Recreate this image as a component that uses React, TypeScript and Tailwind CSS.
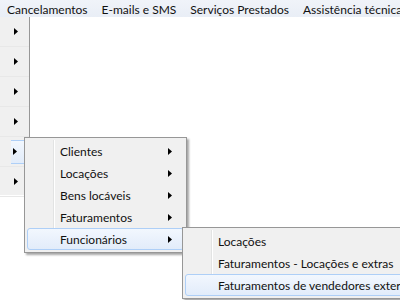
import React from "react";

const Arrow = () => (
  <svg width="4" height="7" viewBox="0 0 4 7" className="block">
    <path d="M0 0 L4 3.5 L0 7 Z" fill="#000" />
  </svg>
);

type Item = { label: string; sub?: boolean; active?: boolean };

const Menu = ({ items, className }: { items: Item[]; className: string }) => (
  <div
    className={
      "absolute bg-[#f0f0f0] border border-[#979797] p-[2px] shadow-[2px_2px_2px_rgba(0,0,0,0.35)] " +
      className
    }
  >
    <div className="absolute top-[2px] bottom-[2px] left-[28px] w-[2px] border-l border-[#e2e3e3] bg-white" />
    {items.map((it) => (
      <div
        key={it.label}
        className={
          "relative flex items-center h-[22px] pl-[32px] pr-[11px] rounded-[3px] border " +
          (it.active
            ? "border-[#aecff7] bg-gradient-to-b from-[#f2f7fe] to-[#e2ecfa]"
            : "border-transparent")
        }
      >
        <span className="flex-1 whitespace-nowrap pt-[2px]">{it.label}</span>
        {it.sub && <Arrow />}
      </div>
    ))}
  </div>
);

export default function App() {
  const bar = ["Cancelamentos", "E-mails e SMS", "Serviços Prestados", "Assistência técnica"];
  const rows = [0, 1, 2, 3, 4, 5];
  return (
    <div
      className="relative w-[400px] h-[300px] overflow-hidden bg-white text-[12px] text-[#111]"
      style={{ fontFamily: 'Lato, "Noto Sans", sans-serif' }}
    >
      <div className="flex h-[17px] items-center bg-gradient-to-b from-[#f0f3f9] to-[#e9eef6] pl-[1px] gap-[2px] whitespace-nowrap">
        {bar.map((b) => (
          <span key={b} className="px-[6px] leading-[17px] pt-[1px]">
            {b}
          </span>
        ))}
      </div>

      <div className="absolute left-0 top-[17px] w-[30px] h-[178px] bg-[#f0f0f0] border-r border-[#979797]">
        {rows.map((r) => (
          <div key={r} className="h-[30px] border-b border-[#e8e8e8] flex items-center justify-end pr-[11px]">
            {r === 4 ? (
              <div className="w-full h-[24px] flex items-center justify-end rounded-r-[3px] border border-l-0 border-[#aecff7] bg-gradient-to-b from-[#f2f7fe] to-[#e2ecfa] -mr-[11px]">
                <div className="mr-[11px]">
                  <Arrow />
                </div>
              </div>
            ) : (
              <Arrow />
            )}
          </div>
        ))}
      </div>

      <Menu
        className="left-[24px] top-[137px] w-[163px]"
        items={[
          { label: "Clientes", sub: true },
          { label: "Locações", sub: true },
          { label: "Bens locáveis", sub: true },
          { label: "Faturamentos", sub: true },
          { label: "Funcionários", sub: true, active: true },
        ]}
      />

      <Menu
        className="left-[182px] top-[227px] w-[260px]"
        items={[
          { label: "Locações" },
          { label: "Faturamentos - Locações e extras" },
          { label: "Faturamentos de vendedores externos", active: true },
        ]}
      />
    </div>
  );
}
